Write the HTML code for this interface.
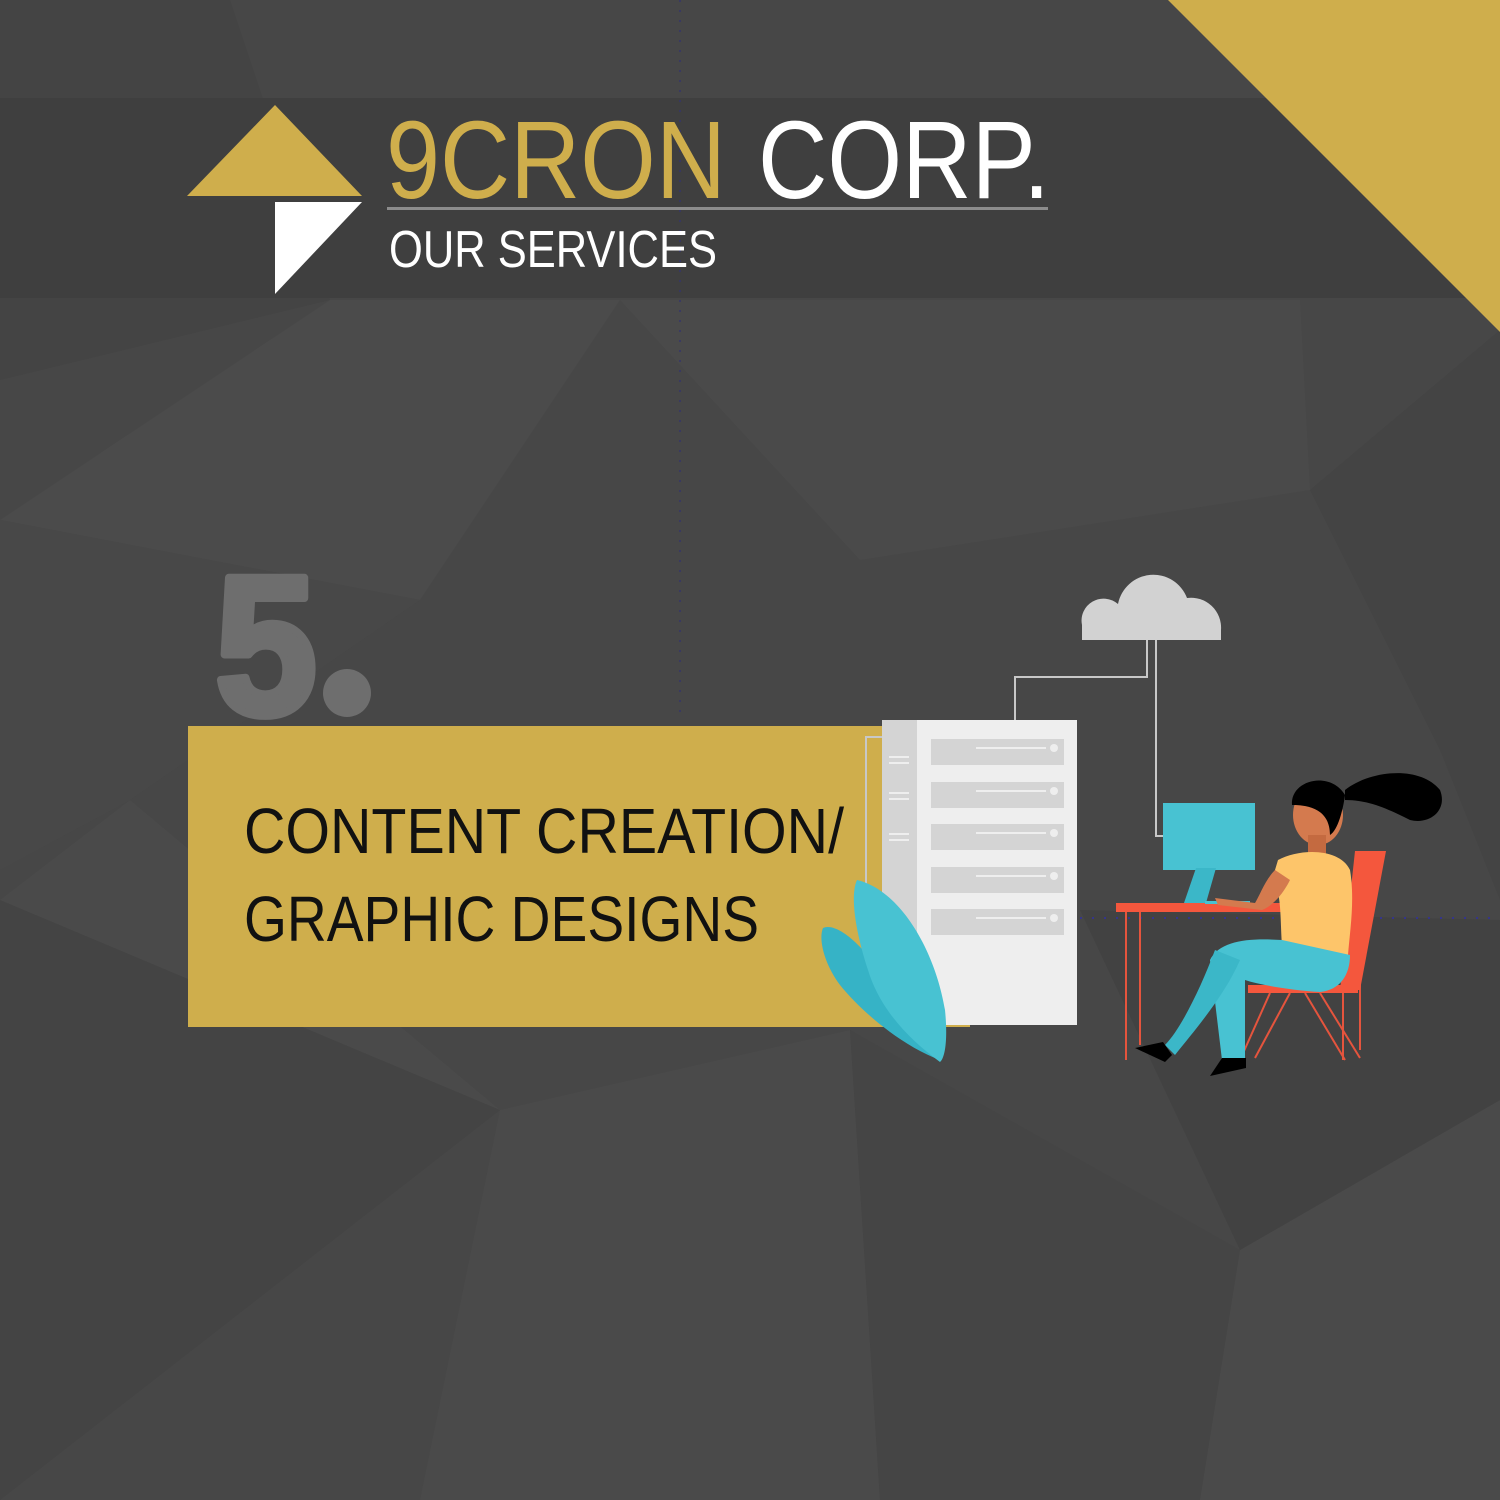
<!DOCTYPE html>
<html><head><meta charset="utf-8"><style>
html,body{margin:0;padding:0;background:#474747;}
svg{display:block}
text{font-family:"Liberation Sans",sans-serif}
</style></head><body>
<svg width="1500" height="1500" viewBox="0 0 1500 1500" xmlns="http://www.w3.org/2000/svg">
<rect width="1500" height="1500" fill="#474747"/>
<polygon points="0,0 230,0 330,300 0,380" fill="#444"/>
<polygon points="330,300 620,300 420,600 0,520" fill="#4b4b4b"/>
<polygon points="620,300 1300,300 1310,490 860,560" fill="#4a4a4a"/>
<polygon points="1310,490 1500,330 1500,900 1440,750" fill="#444"/>
<polygon points="0,900 500,1110 0,1500" fill="#444"/>
<polygon points="500,1110 850,1030 880,1500 420,1500" fill="#4a4a4a"/>
<polygon points="850,1030 1240,1250 1200,1500 880,1500" fill="#454545"/>
<polygon points="1240,1250 1500,1100 1500,1500 1200,1500" fill="#4a4a4a"/>
<polygon points="1080,910 1500,920 1500,1100 1240,1250" fill="#424242"/>
<polygon points="0,520 420,600 130,800 0,870" fill="#484848"/>
<polygon points="130,800 500,1110 0,900" fill="#4a4a4a"/>
<rect x="0" y="98" width="1500" height="200" fill="#3f3f3f"/>
<polygon points="1168,0 1500,0 1500,332" fill="#cfae4c"/>
<line x1="680" y1="0" x2="680" y2="720" stroke="#35356a" stroke-width="1.5" stroke-dasharray="2,8"/>
<line x1="1080" y1="918" x2="1500" y2="918" stroke="#35358a" stroke-width="2" stroke-dasharray="2,10"/>
<polygon points="275,105 362,196 187,196" fill="#cfae4c"/>
<polygon points="275,202 362,202 275,294" fill="#fff"/>
<text x="386" y="198" font-size="110" fill="#cfae4c" textLength="340" lengthAdjust="spacingAndGlyphs">9CRON</text>
<text x="758" y="198" font-size="110" fill="#fff" textLength="292" lengthAdjust="spacingAndGlyphs">CORP.</text>
<rect x="387" y="207" width="661" height="3" fill="#8c8c8c"/>
<text x="389" y="267" font-size="52" fill="#fff" textLength="328" lengthAdjust="spacingAndGlyphs">OUR SERVICES</text>
<text x="215" y="714" font-size="198" font-weight="bold" fill="#6e6e6e" stroke="#6e6e6e" stroke-width="8" stroke-linejoin="round" textLength="102" lengthAdjust="spacingAndGlyphs">5</text>
<circle cx="347" cy="693" r="24" fill="#6e6e6e"/>
<rect x="188" y="726" width="782" height="301" fill="#cfae4c"/>
<text x="244" y="853" font-size="64" fill="#111" textLength="600" lengthAdjust="spacingAndGlyphs">CONTENT CREATION/</text>
<text x="244" y="941" font-size="64" fill="#111" textLength="515" lengthAdjust="spacingAndGlyphs">GRAPHIC DESIGNS</text>
<path d="M1082,640 L1082,625 A22,22 0 0 1 1118,604 A36,36 0 0 1 1187,598 A30,30 0 0 1 1221,630 L1221,640 Z" fill="#d2d2d2"/>
<polyline points="1147,640 1147,677 1015,677 1015,720" fill="none" stroke="#c8c8c8" stroke-width="2"/>
<polyline points="1156,640 1156,836 1163,836" fill="none" stroke="#c8c8c8" stroke-width="2"/>
<polyline points="882,737 866,737 866,900" fill="none" stroke="#c8c8c8" stroke-width="2"/>
<rect x="882" y="720" width="195" height="305" fill="#eeeeee"/>
<rect x="882" y="720" width="35" height="305" fill="#d4d4d4"/>
<g fill="#eee"><rect x="889" y="756" width="20" height="2"/><rect x="889" y="762" width="20" height="2"/><rect x="889" y="792" width="20" height="2"/><rect x="889" y="798" width="20" height="2"/><rect x="889" y="833" width="20" height="2"/><rect x="889" y="839" width="20" height="2"/></g>
<g fill="#d4d4d4"><rect x="931" y="739" width="133" height="26"/><rect x="931" y="782" width="133" height="26"/><rect x="931" y="824" width="133" height="26"/><rect x="931" y="867" width="133" height="26"/><rect x="931" y="909" width="133" height="26"/></g>
<g stroke="#eee" stroke-width="2"><line x1="976" y1="748" x2="1046" y2="748"/><line x1="976" y1="791" x2="1046" y2="791"/><line x1="976" y1="833" x2="1046" y2="833"/><line x1="976" y1="876" x2="1046" y2="876"/><line x1="976" y1="918" x2="1046" y2="918"/></g>
<g fill="#eee"><circle cx="1054" cy="748" r="4"/><circle cx="1054" cy="791" r="4"/><circle cx="1054" cy="833" r="4"/><circle cx="1054" cy="876" r="4"/><circle cx="1054" cy="918" r="4"/></g>
<path d="M823,928 C840,920 880,960 900,1010 C915,1040 935,1055 940,1060 C900,1045 860,1010 840,985 C825,965 818,940 823,928 Z" fill="#36b3c6"/>
<path d="M857,880 C900,890 935,950 945,1010 C948,1040 945,1058 940,1062 C910,1040 880,1010 868,970 C855,930 850,895 857,880 Z" fill="#48c2d2"/>
<rect x="1116" y="903" width="256" height="9" fill="#f4573d"/>
<g stroke="#e5543d" stroke-width="2"><line x1="1126" y1="912" x2="1126" y2="1060"/><line x1="1140" y1="912" x2="1140" y2="1045"/><line x1="1360" y1="912" x2="1360" y2="1050"/><line x1="1343" y1="912" x2="1343" y2="1060"/></g>
<rect x="1163" y="803" width="92" height="67" fill="#48c2d2"/>
<polygon points="1196,868 1216,868 1206,903 1184,903" fill="#3bb7c8"/>
<rect x="1205" y="901" width="45" height="3" fill="#48c2d2"/>
<polygon points="1355,851 1386,851 1360,990 1340,990" fill="#f4573d"/>
<rect x="1248" y="985" width="110" height="8" fill="#f4573d"/>
<g stroke="#e5543d" stroke-width="2"><line x1="1270" y1="993" x2="1240" y2="1060"/><line x1="1290" y1="993" x2="1255" y2="1058"/><line x1="1305" y1="993" x2="1345" y2="1060"/><line x1="1320" y1="993" x2="1360" y2="1058"/></g>
<path d="M1345,790 C1370,770 1420,765 1440,790 C1448,810 1430,825 1410,820 C1390,810 1370,800 1345,800 Z" fill="#000"/>
<ellipse cx="1318" cy="815" rx="25" ry="30" fill="#d47a4e"/>
<path d="M1292,805 C1290,780 1330,770 1345,795 C1343,810 1338,830 1330,835 C1330,810 1310,805 1292,805 Z" fill="#000"/>
<rect x="1308" y="835" width="18" height="20" fill="#c46a40"/>
<path d="M1278,860 C1300,848 1340,848 1350,870 C1355,900 1350,930 1348,955 L1282,945 C1280,920 1282,890 1272,880 Z" fill="#fdc56a"/>
<path d="M1275,870 C1265,880 1260,895 1255,903 L1215,898 L1218,905 L1262,910 C1275,905 1285,890 1290,880 Z" fill="#d47a4e"/>
<path d="M1282,940 L1350,955 C1350,975 1340,990 1320,992 C1290,990 1260,985 1245,980 L1245,1058 L1222,1060 L1210,960 C1220,940 1250,938 1282,940 Z" fill="#48c2d2"/>
<path d="M1215,950 C1200,990 1180,1030 1165,1045 L1175,1055 C1195,1030 1225,995 1240,960 Z" fill="#3bb7c8"/>
<path d="M1135,1048 L1163,1042 L1172,1055 L1165,1062 Z" fill="#000"/>
<path d="M1222,1058 L1246,1058 L1246,1068 L1210,1076 Z" fill="#000"/>
</svg>
</body></html>
